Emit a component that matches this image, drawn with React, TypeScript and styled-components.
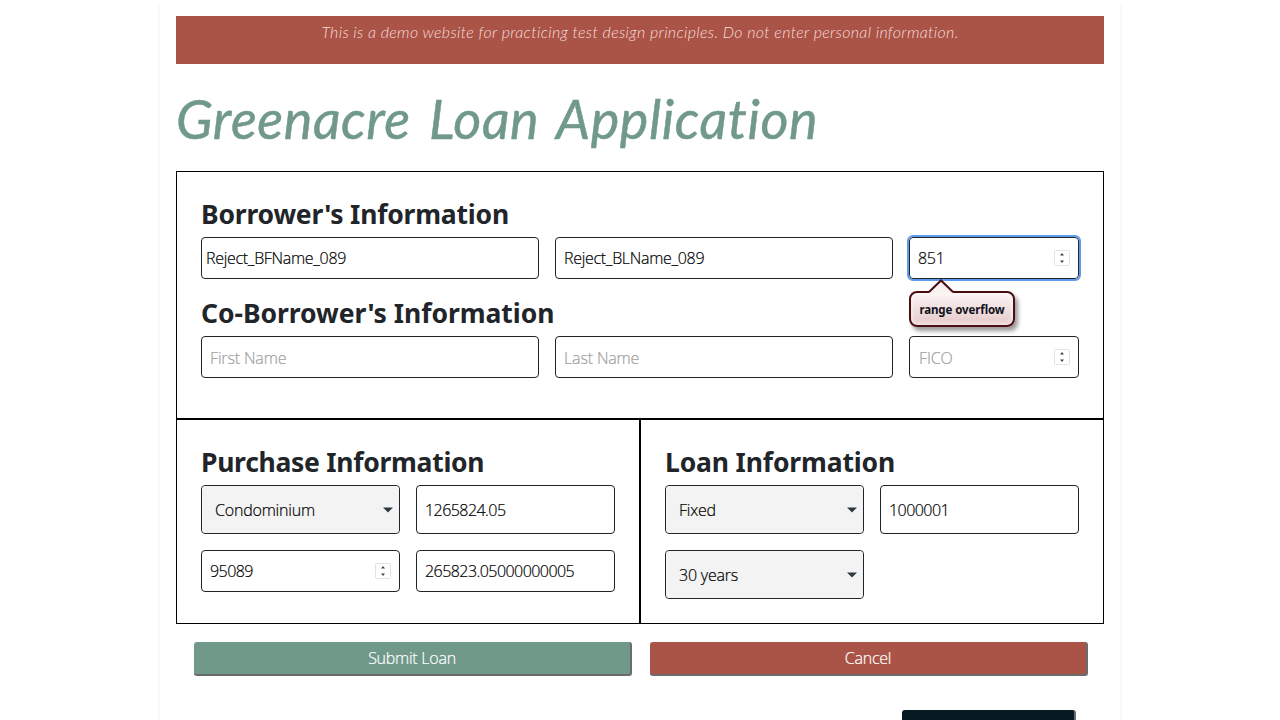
import React from "react";
import styled, { createGlobalStyle, css } from "styled-components";

const GlobalStyle = createGlobalStyle`
  *, *::before, *::after { box-sizing: border-box; }
  html, body { margin: 0; height: 720px; overflow: hidden; background: #fff; }
  body {
    font-family: "Open Sans", "Noto Sans", sans-serif;
    font-size: 16px;
    color: #212529;
  }
`;

const Page = styled.main`
  width: 960px;
  height: 740px;
  overflow: hidden;
  margin: 0 auto;
  padding: 16px;
  background: #fff;
  border-radius: 4px;
  box-shadow: 0 2px 4px rgba(0, 0, 0, 0.08);
`;

const Banner = styled.div`
  height: 48px;
  display: flex;
  justify-content: center;
  background: #aa5347;
  color: #f6dcd8;
  font: italic 300 16px/32px Lato, sans-serif;
  letter-spacing: 0.325px;
  white-space: nowrap;
`;

const Title = styled.h1`
  margin: 0;
  height: 107px;
  color: #71998a;
  font: italic 400 54px/110px Lato, sans-serif;
  letter-spacing: 0.6px;
  word-spacing: 5px;
  -webkit-text-stroke: 0.5px #71998a;
  white-space: nowrap;
`;

const Panel = styled.section`
  flex: 1;
  min-width: 0;
  padding: 24px;
  border: 1px solid #000;
`;

const PanelRow = styled.div`
  display: flex;
`;

const Heading = styled.h2<{ $spacing: number }>`
  margin: 0;
  height: 41px;
  font: 700 26.5px/36px "Noto Sans", sans-serif;
  letter-spacing: ${(p) => p.$spacing}px;
  color: #212529;
  white-space: nowrap;
`;

const PersonFields = styled.div`
  display: grid;
  grid-template-columns: 338px 338px 1fr;
  column-gap: 16px;
  margin-bottom: 16px;
`;

const DetailFields = styled.div`
  display: grid;
  grid-template-columns: 1fr 1fr;
  gap: 16px;
  align-items: start;
`;

const FieldBox = styled.div<{ $focused?: boolean }>`
  position: relative;
  display: flex;
  align-items: center;
  border: 1px solid #212529;
  border-radius: 4px;
  background: #fff;
  ${(p) =>
    p.$focused &&
    css`
      outline: 2px solid #5b9cec;
      outline-offset: 0;
    `}
`;

const control = css`
  width: 100%;
  border: 0;
  outline: 0;
  background: transparent;
  color: #000;
  font: 300 16px/22px "Open Sans", sans-serif;
  -webkit-text-stroke: 0.2px currentColor;
`;

const Input = styled.input<{ $tall?: boolean; $indent?: number; $spacing?: number }>`
  ${control}
  height: ${(p) => (p.$tall ? 47 : 40)}px;
  padding: 0 0 0 ${(p) => p.$indent ?? 8}px;
  letter-spacing: ${(p) => p.$spacing ?? -0.55}px;
  &:placeholder-shown {
    padding-top: 2px;
    letter-spacing: -0.15px;
  }
  &::placeholder {
    color: #a0a0a0;
    opacity: 1;
  }
`;

const Select = styled.select`
  ${control}
  appearance: none;
  height: 47px;
  padding: 0 0 0 13px;
  border-radius: 4px;
  background: #f3f3f3;
  letter-spacing: -0.2px;
`;

const Caret = styled.svg`
  position: absolute;
  right: 6px;
  top: 21px;
  width: 10px;
  height: 6px;
  fill: #2f3a3f;
`;

const Spinner = styled.svg`
  flex: none;
  width: 16px;
  height: 16px;
  margin-right: 8px;
`;

const Tooltip = styled.div`
  position: absolute;
  z-index: 2;
  left: -1px;
  top: 53px;
  width: 106px;
  height: 36px;
  border: 2px solid #4b0d10;
  border-radius: 8px;
  background: linear-gradient(#fbf4f4, #e6c9c9);
  box-shadow: 3px 4px 4px rgba(0, 0, 0, 0.4), inset 0 0 4px 1px rgba(255, 255, 255, 0.7);
  font: 700 11.5px/34px "Noto Sans", sans-serif;
  letter-spacing: -0.1px;
  color: #101020;
  text-align: center;
  white-space: nowrap;
`;

const Pointer = styled.svg`
  position: absolute;
  left: 17px;
  top: -14px;
  width: 26px;
  height: 15px;
`;

const Actions = styled.div`
  display: flex;
  gap: 18px;
  padding: 18px 16px 0 18px;
`;

const Button = styled.button<{ $bg: string }>`
  flex: 1;
  height: 34px;
  padding: 0;
  border: solid #6b6b6b;
  border-width: 0 2px 2px 0;
  border-radius: 3px;
  background: ${(p) => p.$bg};
  color: #fff;
  font: 300 16px/32px "Open Sans", sans-serif;
  letter-spacing: -0.25px;
  -webkit-text-stroke: 0.2px currentColor;
`;

const Footer = styled.div`
  display: flex;
  justify-content: flex-end;
  padding: 34px 28px 0 0;
`;

const DarkButton = styled(Button)`
  flex: none;
  width: 174px;
`;

function Stepper() {
  return (
    <Spinner viewBox="0 0 16 16">
      <rect x="0.5" y="0.5" width="15" height="15" rx="1" fill="#fff" stroke="#e2e2e2" />
      <path d="M6 5.5 8 3 10 5.5zM6 10.5 8 13 10 10.5z" fill="#444" />
    </Spinner>
  );
}

function Dropdown({ value }: { value: string }) {
  return (
    <FieldBox>
      <Select defaultValue={value}>
        <option>{value}</option>
      </Select>
      <Caret viewBox="0 0 10 6">
        <path d="M0 .5H10L5 5.5z" />
      </Caret>
    </FieldBox>
  );
}

export default function App() {
  return (
    <>
      <GlobalStyle />
      <Page>
        <Banner>
          This is a demo website for practicing test design principles. Do not enter personal information.
        </Banner>
        <Title>Greenacre Loan Application</Title>
        <Panel>
          <Heading $spacing={-0.2}>Borrower's Information</Heading>
          <PersonFields>
            <FieldBox>
              <Input defaultValue="Reject_BFName_089" $indent={4} $spacing={-0.3} />
            </FieldBox>
            <FieldBox>
              <Input defaultValue="Reject_BLName_089" $spacing={-0.3} />
            </FieldBox>
            <FieldBox $focused>
              <Input defaultValue="851" $spacing={-0.3} />
              <Stepper />
              <Tooltip>
                <Pointer viewBox="0 0 26 15">
                  <path d="M1 13.5 13 1.5 25 13.5V15H1z" fill="#faf1f1" />
                  <path d="M1 13 13 1.5 25 13" fill="none" stroke="#4b0d10" strokeWidth="2" />
                </Pointer>
                range overflow
              </Tooltip>
            </FieldBox>
          </PersonFields>
          <Heading $spacing={-0.04}>Co-Borrower's Information</Heading>
          <PersonFields>
            <FieldBox>
              <Input placeholder="First Name" />
            </FieldBox>
            <FieldBox>
              <Input placeholder="Last Name" />
            </FieldBox>
            <FieldBox>
              <Input placeholder="FICO" $indent={9} />
              <Stepper />
            </FieldBox>
          </PersonFields>
        </Panel>
        <PanelRow>
          <Panel>
            <Heading $spacing={-0.28}>Purchase Information</Heading>
            <DetailFields>
              <Dropdown value="Condominium" />
              <FieldBox>
                <Input $tall defaultValue="1265824.05" />
              </FieldBox>
              <FieldBox>
                <Input defaultValue="95089" />
                <Stepper />
              </FieldBox>
              <FieldBox>
                <Input defaultValue="265823.05000000005" />
              </FieldBox>
            </DetailFields>
          </Panel>
          <Panel>
            <Heading $spacing={-0.15}>Loan Information</Heading>
            <DetailFields>
              <Dropdown value="Fixed" />
              <FieldBox>
                <Input $tall defaultValue="1000001" />
              </FieldBox>
              <Dropdown value="30 years" />
            </DetailFields>
          </Panel>
        </PanelRow>
        <Actions>
          <Button $bg="#71998a">Submit Loan</Button>
          <Button $bg="#aa5347">Cancel</Button>
        </Actions>
        <Footer>
          <DarkButton $bg="#071a21" />
        </Footer>
      </Page>
    </>
  );
}
